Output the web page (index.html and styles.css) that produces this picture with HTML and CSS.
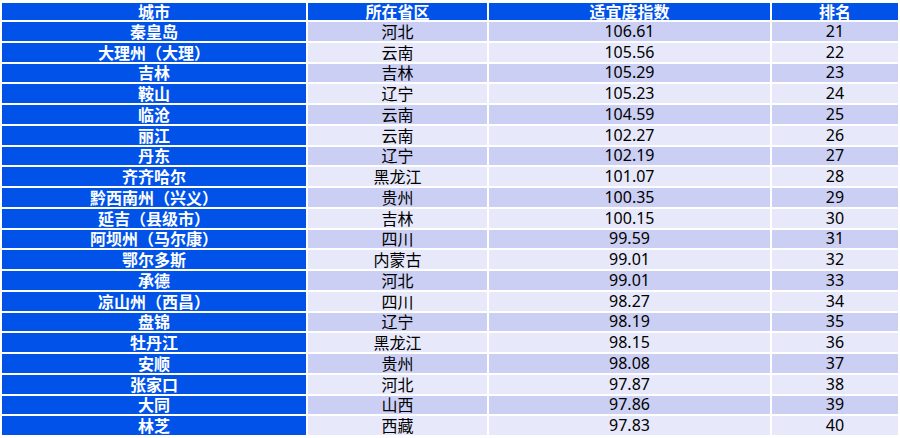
FILE: index.html
```html
<!DOCTYPE html>
<html lang="zh-CN">
<head>
<meta charset="utf-8">
<link rel="stylesheet" href="styles.css">
</head>
<body>
<table class="rank">
<colgroup>
<col class="c1"><col class="c2"><col class="c3"><col class="c4">
</colgroup>
<thead>
<tr><th>城市</th><th>所在省区</th><th>适宜度指数</th><th>排名</th></tr>
</thead>
<tbody>
<tr><th>秦皇岛</th><td>河北</td><td class="num">106.61</td><td class="num">21</td></tr>
<tr><th>大理州（大理）</th><td>云南</td><td class="num">105.56</td><td class="num">22</td></tr>
<tr><th>吉林</th><td>吉林</td><td class="num">105.29</td><td class="num">23</td></tr>
<tr><th>鞍山</th><td>辽宁</td><td class="num">105.23</td><td class="num">24</td></tr>
<tr><th>临沧</th><td>云南</td><td class="num">104.59</td><td class="num">25</td></tr>
<tr><th>丽江</th><td>云南</td><td class="num">102.27</td><td class="num">26</td></tr>
<tr><th>丹东</th><td>辽宁</td><td class="num">102.19</td><td class="num">27</td></tr>
<tr><th>齐齐哈尔</th><td>黑龙江</td><td class="num">101.07</td><td class="num">28</td></tr>
<tr><th>黔西南州（兴义）</th><td>贵州</td><td class="num">100.35</td><td class="num">29</td></tr>
<tr><th>延吉（县级市）</th><td>吉林</td><td class="num">100.15</td><td class="num">30</td></tr>
<tr><th>阿坝州（马尔康）</th><td>四川</td><td class="num">99.59</td><td class="num">31</td></tr>
<tr><th>鄂尔多斯</th><td>内蒙古</td><td class="num">99.01</td><td class="num">32</td></tr>
<tr><th>承德</th><td>河北</td><td class="num">99.01</td><td class="num">33</td></tr>
<tr><th>凉山州（西昌）</th><td>四川</td><td class="num">98.27</td><td class="num">34</td></tr>
<tr><th>盘锦</th><td>辽宁</td><td class="num">98.19</td><td class="num">35</td></tr>
<tr><th>牡丹江</th><td>黑龙江</td><td class="num">98.15</td><td class="num">36</td></tr>
<tr><th>安顺</th><td>贵州</td><td class="num">98.08</td><td class="num">37</td></tr>
<tr><th>张家口</th><td>河北</td><td class="num">97.87</td><td class="num">38</td></tr>
<tr><th>大同</th><td>山西</td><td class="num">97.86</td><td class="num">39</td></tr>
<tr><th>林芝</th><td>西藏</td><td class="num">97.83</td><td class="num">40</td></tr>
</tbody>
</table>
</body>
</html>
```
FILE: styles.css
```css
html, body {
  margin: 0;
  padding: 0;
  background: #ffffff;
}
.rank {
  margin-top: 1px;
  width: 900px;
  height: 436px;
  border-collapse: separate;
  border-spacing: 2px;
  table-layout: fixed;
  font-family: "Noto Sans CJK SC", "Noto Sans", sans-serif;
  font-size: 16px;
}
.c1 { width: 304px; }
.c2 { width: 179px; }
.c3 { width: 281px; }
.c4 { width: 126px; }
.rank th, .rank td {
  padding: 0;
  text-align: center;
  line-height: 17px;
  white-space: nowrap;
}
.rank th {
  background: #0052e8;
  color: #ffffff;
  font-weight: bold;
}
.rank td {
  color: #000000;
  font-weight: normal;
}
.rank td.num {
  font-family: "Noto Sans", "Noto Sans CJK SC", sans-serif;
  font-size: 16px;
}
.rank tbody tr:nth-child(odd) td { background: #cbcff4; }
.rank tbody tr:nth-child(even) td { background: #e7e9fa; }
```
